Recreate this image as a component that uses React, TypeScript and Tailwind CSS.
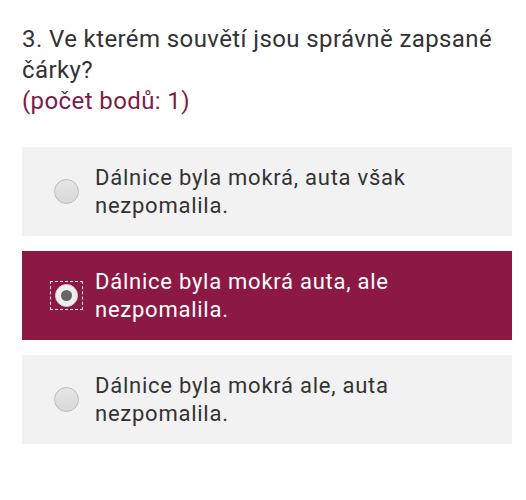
import React, { useState } from "react";

const options = [
  "Dálnice byla mokrá, auta však nezpomalila.",
  "Dálnice byla mokrá auta, ale nezpomalila.",
  "Dálnice byla mokrá ale, auta nezpomalila.",
];

export default function App() {
  const [selected, setSelected] = useState(1);

  return (
    <div className="w-[526px] h-[500px] bg-white font-['Roboto',sans-serif] px-[22px] pt-[24px]">
      <div className="text-[24px] leading-[31px] tracking-[0.4px] text-[#333333]">
        3. Ve kterém souvětí jsou správně zapsané čárky?
      </div>
      <div className="text-[24px] leading-[31px] tracking-[0.4px] text-[#7a1d48]">(počet bodů: 1)</div>

      <div className="mt-[30px] w-[490px] flex flex-col gap-[15px]">
        {options.map((text, i) => {
          const active = selected === i;
          return (
            <div
              key={i}
              onClick={() => setSelected(i)}
              className={`h-[89px] flex items-center pl-[32px] pr-[32px] gap-[16px] cursor-pointer ${
                active ? "bg-[#8c1944] text-white" : "bg-[#f2f2f2] text-[#333333]"
              }`}
            >
              {active ? (
                <div className="w-[33px] h-[29px] -ml-[4px] -mr-[4px] border-[1.5px] border-dashed border-white/90 flex items-center justify-center flex-shrink-0">
                  <div className="w-[23px] h-[23px] rounded-full bg-[#eeeeee] border border-[#d0d0d0] flex items-center justify-center">
                    <div className="w-[11px] h-[11px] rounded-full bg-[#666666]" />
                  </div>
                </div>
              ) : (
                <div className="w-[25px] h-[25px] rounded-full border border-[#bdbdbd] bg-gradient-to-b from-[#e6e6e6] to-[#d8d8d8] flex-shrink-0" />
              )}
              <div className="text-[22px] leading-[28px] tracking-[0.75px]">{text}</div>
            </div>
          );
        })}
      </div>
    </div>
  );
}
